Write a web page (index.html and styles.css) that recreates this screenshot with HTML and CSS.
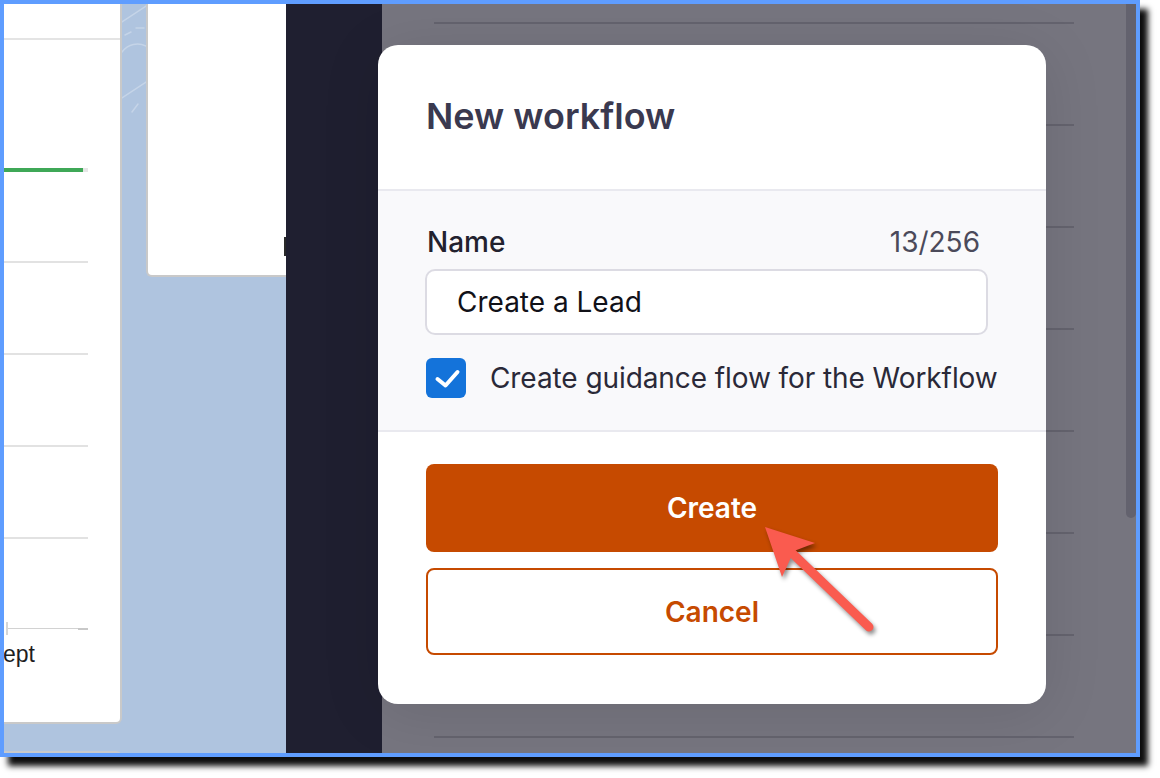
FILE: index.html
```html
<!DOCTYPE html>
<html lang="en">
<head>
    <meta charset="UTF-8">
    <meta name="viewport" content="width=device-width, initial-scale=1.0">
    <title>New workflow</title>
    <link rel="stylesheet" href="styles.css">
</head>
<body>
    <div class="window">
        <!-- dashboard behind the drawer -->
        <div class="backdrop">
            <div class="card-column">
                <div class="report-card">
                    <div class="report-head"></div>
                    <div class="progress"><span class="progress-fill"></span></div>
                    <div class="gridline first"></div>
                    <div class="gridline"></div>
                    <div class="gridline"></div>
                    <div class="gridline"></div>
                    <div class="axis">
                        <span class="tick"></span>
                        <span class="axis-line"></span>
                        <span class="axis-end"></span>
                    </div>
                    <div class="axis-label">ept</div>
                </div>
                <div class="report-card next"></div>
            </div>

            <div class="gutter">
                <svg width="24" height="120" viewBox="0 0 24 120">
                    <g fill="none" stroke="#fff" stroke-opacity="0.28" stroke-width="1.5" stroke-linecap="round">
                        <path d="M0 18 L24 2" />
                        <path d="M3 31 L9 28" />
                        <path d="M14 24 L22 24" />
                        <path d="M0 48 C6 40 16 38 24 42" />
                        <path d="M0 94 L24 78" />
                        <path d="M10 108 L16 100" />
                    </g>
                </svg>
            </div>

            <div class="side-card">
                <span class="side-mark"></span>
            </div>
        </div>

        <!-- drawer with dialog on top -->
        <div class="panel">
            <div class="panel-bg">
                <div class="nav"></div>
                <div class="rows">
                    <div class="row"></div>
                    <div class="row"></div>
                    <div class="row"></div>
                    <div class="row"></div>
                    <div class="row"></div>
                    <div class="row"></div>
                    <div class="row"></div>
                    <div class="row"></div>
                </div>
                <div class="scrollbar"><div class="thumb"></div></div>
            </div>

            <div class="modal">
                <div class="modal-header">
                    <h2>New workflow</h2>
                </div>
                <div class="modal-body">
                    <div class="field">
                        <div class="field-label">
                            <label for="wfName">Name</label>
                            <span class="counter">13/256</span>
                        </div>
                        <input id="wfName" class="text-input" type="text" value="Create a Lead">
                    </div>
                    <div class="check-row">
                        <span class="checkbox">
                            <svg width="40" height="40" viewBox="0 0 40 40">
                                <path d="M11.5 21 L19.5 27.5 L31.5 14" fill="none" stroke="#fff" stroke-width="4" stroke-linecap="round" stroke-linejoin="round" />
                            </svg>
                        </span>
                        <span class="check-text">Create guidance flow for the Workflow</span>
                    </div>
                </div>
                <div class="modal-footer">
                    <button class="btn btn-primary">Create</button>
                    <button class="btn btn-outline">Cancel</button>
                </div>
            </div>
        </div>

        <!-- callout arrow -->
        <svg class="callout" width="1140" height="757" viewBox="0 0 1140 757">
            <line x1="791" y1="552" x2="869" y2="627" stroke="#fa5b4f" stroke-width="9" stroke-linecap="round" />
            <polygon points="765,527 815,543 794,551 782,577" fill="#fa5b4f" />
        </svg>
    </div>
</body>
</html>
```

FILE: styles.css
```css
* {
    margin: 0;
    padding: 0;
    box-sizing: border-box;
}

body {
    background: #fff;
    font-family: Inter, 'Noto Sans', sans-serif;
    min-height: 778px;
}

.window {
    position: relative;
    width: 1140px;
    height: 757px;
    border: 4px solid #5f9dff;
    box-shadow: 8px 9px 6px rgba(0, 0, 0, 0.95);
    display: flex;
    overflow: hidden;
}

/* ---- dashboard ---- */
.backdrop {
    width: 282px;
    flex-shrink: 0;
    background: #afc4df;
    display: flex;
    overflow: hidden;
}

.card-column {
    width: 118px;
    flex-shrink: 0;
    display: flex;
    flex-direction: column;
    gap: 27px;
}

.report-card {
    height: 720px;
    flex-shrink: 0;
    background: #fff;
    border-right: 2px solid #c9c9c9;
    border-bottom: 2px solid #c9c9c9;
    border-bottom-right-radius: 6px;
    overflow: hidden;
}

.report-card.next {
    height: 40px;
    border-bottom: none;
    border-top: 2px solid #c9c9c9;
    border-radius: 0 6px 0 0;
}

.report-head {
    height: 36px;
    border-bottom: 2px solid #e4e4e4;
}

.progress {
    width: 84px;
    height: 4px;
    margin-top: 128px;
    background: #e6e6e6;
}

.progress-fill {
    display: block;
    width: 79px;
    height: 4px;
    background: #3fa857;
}

.gridline {
    width: 84px;
    height: 2px;
    margin-top: 90px;
    background: #e2e2e2;
}

.gridline.first {
    margin-top: 89px;
}

.axis {
    width: 84px;
    height: 13px;
    margin-top: 83px;
    display: flex;
    align-items: center;
}

.tick {
    width: 2px;
    height: 13px;
    margin-left: 2px;
    background: #d6d6d6;
}

.axis-line {
    flex: 1;
    height: 1px;
    background: #d2d2d2;
}

.axis-end {
    width: 10px;
    height: 2px;
    background: #c8c8c8;
}

.axis-label {
    margin: 5px 0 0 -1px;
    font-family: 'Liberation Sans', Arial, sans-serif;
    font-size: 23px;
    line-height: 28px;
    color: #1e1e1e;
}

.gutter {
    width: 24px;
    flex-shrink: 0;
}

.side-card {
    width: 200px;
    height: 273px;
    flex-shrink: 0;
    background: #fff;
    border-left: 2px solid #c9c9c9;
    border-bottom: 2px solid #c9c9c9;
    border-bottom-left-radius: 6px;
    padding: 233px 0 0 136px;
}

.side-mark {
    display: block;
    width: 3px;
    height: 19px;
    background: #2a2a2a;
}

/* ---- drawer ---- */
.panel {
    flex: 1;
    display: grid;
}

.panel > * {
    grid-area: 1 / 1;
}

.panel-bg {
    display: flex;
}

.nav {
    width: 96px;
    background: #1f1f30;
}

.rows {
    flex: 1;
    background: #76757f;
    padding: 18px 52px 0;
    display: flex;
    flex-direction: column;
}

.row {
    height: 102px;
    flex-shrink: 0;
    border-top: 2px solid #64636e;
}

.scrollbar {
    width: 10px;
    background: #76757f;
}

.thumb {
    height: 514px;
    background: #63626e;
    border-radius: 0 0 5px 5px;
}

/* ---- dialog ---- */
.modal {
    align-self: start;
    justify-self: start;
    margin: 41px 0 0 92px;
    width: 668px;
    height: 659px;
    background: #fff;
    border-radius: 20px;
    box-shadow: 0 8px 60px rgba(0, 0, 0, 0.1);
    overflow: hidden;
    display: flex;
    flex-direction: column;
}

.modal-header {
    height: 146px;
    flex-shrink: 0;
    padding: 0 48px;
    display: flex;
    align-items: center;
    border-bottom: 2px solid #e9e9ef;
}

.modal-header h2 {
    font-size: 36px;
    line-height: 40px;
    font-weight: 600;
    color: #3a394f;
    margin-top: -2px;
}

.modal-body {
    flex-shrink: 0;
    background: #f9f9fb;
    padding: 34px 48px 32px 47px;
    border-bottom: 2px solid #e9e9ef;
}

.field {
    width: 563px;
}

.field-label {
    display: flex;
    justify-content: space-between;
    padding: 0 8px 0 2px;
    font-size: 28px;
    line-height: 34px;
}

.field-label label {
    font-weight: 500;
    color: #22212e;
}

.counter {
    color: #4b4a5a;
}

.text-input {
    display: block;
    width: 100%;
    height: 66px;
    margin-top: 10px;
    padding: 0 30px;
    border: 2px solid #dcdbe3;
    border-radius: 10px;
    background: #fff;
    font-family: Inter, 'Noto Sans', sans-serif;
    font-size: 28px;
    color: #111118;
    outline: none;
}

.check-row {
    display: flex;
    align-items: center;
    gap: 24px;
    margin-top: 23px;
    padding-left: 1px;
}

.checkbox {
    width: 40px;
    height: 40px;
    flex-shrink: 0;
    border-radius: 6px;
    background: #1473da;
}

.checkbox svg {
    display: block;
}

.check-text {
    font-size: 28px;
    line-height: 34px;
    color: #2a2938;
    white-space: nowrap;
    letter-spacing: -0.08px;
}

.modal-footer {
    flex: 1;
    padding: 32px 48px 48px;
    display: flex;
    flex-direction: column;
    gap: 16px;
}

.btn {
    height: 88px;
    flex-shrink: 0;
    border-radius: 8px;
    font-family: Inter, 'Noto Sans', sans-serif;
    font-size: 28px;
    font-weight: 600;
    cursor: pointer;
}

.btn-primary {
    background: #c64a00;
    border: none;
    color: #fff;
}

.btn-outline {
    height: 87px;
    background: #fff;
    border: 2px solid #c64a00;
    color: #c64a00;
}

/* annotation arrow over everything */
.callout {
    position: absolute;
    left: -4px;
    top: -4px;
    pointer-events: none;
    filter: drop-shadow(2px 3px 2px rgba(0, 0, 0, 0.45));
}
```
